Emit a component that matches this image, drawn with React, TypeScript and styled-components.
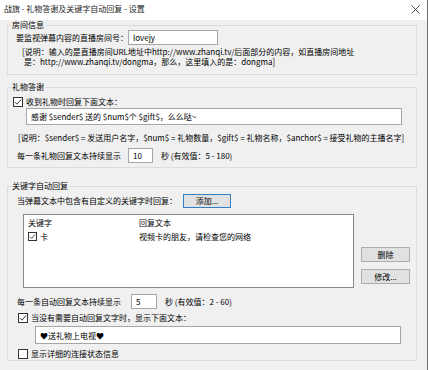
import React from "react";
import styled, { createGlobalStyle } from "styled-components";

const Global = createGlobalStyle`
  html, body { margin: 0; padding: 0; background: #ffffff; }
  body {
    font-family: "Noto Sans CJK SC", "Noto Sans", "DejaVu Sans", sans-serif;
    font-size: 8px;
    color: #000;
  }
  * { box-sizing: border-box; }
`;

const Window = styled.div`
  width: 428px;
  height: 370px;
  display: flex;
  flex-direction: column;
  background: #f0f0f0;
  border-right: 1px solid #6e6e6e;
`;

const TitleBar = styled.div`
  height: 20px;
  flex: 0 0 20px;
  background: #ffffff;
  display: flex;
  align-items: center;
  justify-content: space-between;
  padding: 0 7px 2px 4px;
`;

const TitleText = styled.span`
  font-size: 8px;
  line-height: 10px;
  color: #1c1c1c;
`;

const Body = styled.div`
  flex: 1;
  display: flex;
  flex-direction: column;
  padding: 0 10px 0 7px;
`;

const Group = styled.fieldset<{ $top: number; $bottom: number }>`
  margin: ${(p) => p.$top}px 0 0 0;
  padding: 0 0 ${(p) => p.$bottom}px 8px;
  border: 1px solid #dcdcdc;
  min-width: 0;
  display: flex;
  flex-direction: column;
`;

const Legend = styled.legend`
  font-size: 8px;
  line-height: 10px;
  padding: 0 1px;
  margin-left: -5px;
`;

const Row = styled.div<{ $top: number; $h: number; $left?: number }>`
  display: flex;
  align-items: center;
  height: ${(p) => p.$h}px;
  margin-top: ${(p) => p.$top}px;
  margin-left: ${(p) => p.$left ?? 0}px;
  line-height: 10px;
  white-space: nowrap;
`;

const Label = styled.span<{ $w?: number }>`
  flex: 0 0 ${(p) => (p.$w ? `${p.$w}px` : "auto")};
  white-space: nowrap;
`;

const After = styled.span`
  margin-left: 8px;
  white-space: nowrap;
`;

const TextBox = styled.input<{ $w: number; $h: number; $left?: number }>`
  width: ${(p) => p.$w}px;
  height: ${(p) => p.$h}px;
  margin: 0 0 0 ${(p) => p.$left ?? 0}px;
  padding: 0 0 0 4px;
  border: 1px solid #a6a6a6;
  background: #ffffff;
  font-family: "Noto Sans CJK SC", "DejaVu Sans", sans-serif;
  font-size: 8px;
  color: #000;
  outline: none;
  flex: 0 0 auto;
`;

const Desc = styled.div<{ $top: number; $left: number; $lh: number }>`
  margin-top: ${(p) => p.$top}px;
  padding-left: ${(p) => p.$left}px;
  line-height: ${(p) => p.$lh}px;
  white-space: nowrap;
`;

const DescLine = styled.div<{ $indent?: number }>`
  padding-left: ${(p) => p.$indent ?? 0}px;
`;

const BoxMark = styled.span<{ $size: number }>`
  width: ${(p) => p.$size}px;
  height: ${(p) => p.$size}px;
  border: 1px solid #333333;
  background: #ffffff;
  display: inline-flex;
  align-items: center;
  justify-content: center;
  flex: 0 0 auto;
  margin-right: 3px;
`;

const Check = ({ checked, size = 10 }: { checked: boolean; size?: number }) => (
  <BoxMark $size={size}>
    {checked && (
      <svg width={size - 2} height={size - 2} viewBox="0 0 8 8">
        <path d="M1 4.2 L3 6.2 L7 1.5" fill="none" stroke="#222" strokeWidth="0.9" />
      </svg>
    )}
  </BoxMark>
);

const Button = styled.button<{ $w: number; $h: number; $default?: boolean; $left?: number }>`
  width: ${(p) => p.$w}px;
  height: ${(p) => p.$h}px;
  margin-left: ${(p) => p.$left ?? 0}px;
  padding: 0;
  border: 1px solid ${(p) => (p.$default ? "#2f7fc9" : "#adadad")};
  background: #e1e1e1;
  font-family: "Noto Sans CJK SC", sans-serif;
  font-size: 8px;
  line-height: 10px;
  color: #000;
  flex: 0 0 auto;
`;

const ListArea = styled.div`
  display: flex;
  margin-top: 6px;
  margin-left: 7px;
  height: 74px;
`;

const ListView = styled.div`
  width: 331px;
  height: 74px;
  border: 1px solid #828790;
  background: #ffffff;
  padding: 2px 0 0 4px;
  display: flex;
  flex-direction: column;
`;

const ListRow = styled.div<{ $h: number; $top?: number }>`
  display: flex;
  align-items: center;
  height: ${(p) => p.$h}px;
  margin-top: ${(p) => p.$top ?? 0}px;
  line-height: 10px;
  white-space: nowrap;
`;

const Cell = styled.div<{ $w?: number }>`
  flex: 0 0 ${(p) => (p.$w ? `${p.$w}px` : "auto")};
  display: flex;
  align-items: center;
`;

const SideButtons = styled.div`
  display: flex;
  flex-direction: column;
  justify-content: flex-end;
  gap: 7px;
  padding: 0 0 4px 7px;
`;

const CloseIcon = () => (
  <svg width="9" height="9" viewBox="0 0 9 9">
    <path d="M0.5 0.5 L8.5 8.5 M8.5 0.5 L0.5 8.5" stroke="#333" strokeWidth="0.9" />
  </svg>
);

export default function App() {
  return (
    <>
      <Global />
      <Window>
        <TitleBar>
          <TitleText>战旗 - 礼物答谢及关键字自动回复 - 设置</TitleText>
          <CloseIcon />
        </TitleBar>
        <Body>
          <Group $top={0} $bottom={8}>
            <Legend>房间信息</Legend>
            <Row $top={0} $h={15}>
              <Label $w={112}>要监视弹幕内容的直播房间号：</Label>
              <TextBox $w={90} $h={15} readOnly defaultValue="lovejy" />
            </Row>
            <Desc $top={2} $left={6} $lh={9.5}>
              <DescLine>[说明：输入的是直播房间URL地址中http://www.zhanqi.tv/后面部分的内容，如直播房间地址</DescLine>
              <DescLine $indent={2}>是：http://www.zhanqi.tv/dongma，那么，这里填入的是：dongma]</DescLine>
            </Desc>
          </Group>

          <Group $top={7} $bottom={4}>
            <Legend>礼物答谢</Legend>
            <Row $top={4} $h={12} $left={-3}>
              <Check checked />
              <Label>收到礼物时回复下面文本：</Label>
            </Row>
            <Row $top={0} $h={17}>
              <TextBox $w={376} $h={17} $left={10} readOnly defaultValue="感谢 $sender$ 送的 $num$个 $gift$，么么哒~" />
            </Row>
            <Desc $top={8} $left={2} $lh={10}>
              <DescLine>[说明：$sender$ = 发送用户名字，$num$ = 礼物数量，$gift$ = 礼物名称，$anchor$ = 接受礼物的主播名字]</DescLine>
            </Desc>
            <Row $top={5} $h={15} $left={1}>
              <Label $w={111}>每一条礼物回复文本持续显示</Label>
              <TextBox $w={25} $h={15} readOnly defaultValue="10" />
              <After>秒 (有效值：5 - 180)</After>
            </Row>
          </Group>

          <Group $top={13} $bottom={0}>
            <Legend>关键字自动回复</Legend>
            <Row $top={3} $h={14} $left={1}>
              <Label $w={166}>当弹幕文本中包含有自定义的关键字时回复：</Label>
              <Button $w={48} $h={14} $default>添加...</Button>
            </Row>
            <ListArea>
              <ListView>
                <ListRow $h={12}>
                  <Cell $w={111}>关键字</Cell>
                  <Cell>回复文本</Cell>
                </ListRow>
                <ListRow $h={13} $top={1}>
                  <Cell $w={111}>
                    <Check checked size={9} />
                    卡
                  </Cell>
                  <Cell>视频卡的朋友，请检查您的网络</Cell>
                </ListRow>
              </ListView>
              <SideButtons>
                <Button $w={49} $h={15}>删除</Button>
                <Button $w={49} $h={15}>修改...</Button>
              </SideButtons>
            </ListArea>
            <Row $top={6} $h={15} $left={1}>
              <Label $w={114}>每一条自动回复文本持续显示</Label>
              <TextBox $w={26} $h={15} readOnly defaultValue="5" />
              <After>秒 (有效值：2 - 60)</After>
            </Row>
            <Row $top={3} $h={12} $left={2}>
              <Check checked />
              <Label>当没有需要自动回复文字时，显示下面文本：</Label>
            </Row>
            <Row $top={2} $h={18}>
              <TextBox $w={366} $h={18} $left={19} readOnly defaultValue="♥送礼物上电视♥" />
            </Row>
            <Row $top={4} $h={12} $left={2}>
              <Check checked={false} />
              <Label>显示详细的连接状态信息</Label>
            </Row>
          </Group>
        </Body>
      </Window>
    </>
  );
}
